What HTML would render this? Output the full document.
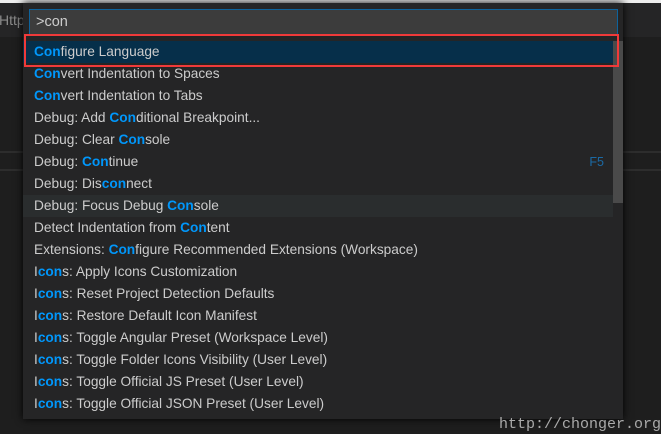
<!DOCTYPE html>
<html><head><style>
body{margin:0;width:661px;height:434px;background:#1e1e1e;position:relative;overflow:hidden;font-family:"Liberation Sans",sans-serif;}
.top{position:absolute;left:0;top:0;width:661px;height:3px;background:#eeeeee}
.tab{position:absolute;left:0;top:3px;width:661px;height:34px;background:#252526}
.http{position:absolute;left:-1px;top:12px;color:#8a8a8a;font-size:14px}
.line{position:absolute;left:0;width:661px;height:2px;background:#2d2d2d}
.w{position:absolute;left:23px;top:3px;width:600px;height:416px;background:#252526;box-shadow:0 0 8px #000}
.inp{position:absolute;left:6px;top:6px;width:581px;height:24px;background:#3c3c3c;border:1px solid #0e639c;color:#ccc;font-size:14.5px;line-height:24px;padding-left:6px;box-sizing:content-box}
.rows{position:absolute;left:0;top:38px;width:590px}
.r{height:22px;line-height:22px;color:#cccccc;font-size:13.7px;padding-left:11px;position:relative}
.r b{color:#0097fb}
.sel{background:#062f4a}
.hov{background:#2a2d2e}
.f5{position:absolute;right:9px;top:0;color:#1b6aa5;font-size:12.5px}
.sb{position:absolute;left:590px;top:38px;width:10px;height:162px;background:#4a4a4a}
.red{position:absolute;left:24px;top:34px;width:591px;height:29px;border:2px solid #f03a3a}
.wm{position:absolute;left:499px;top:416px;color:#aaa;font-family:"Liberation Mono",monospace;font-size:15px}
</style></head><body>
<div class="top"></div><div class="tab"></div>
<div class="http">Http</div>
<div class="line" style="top:151px"></div><div class="line" style="top:169px"></div>
<div class="w">
<div class="inp">&gt;con</div>
<div class="rows">
<div class="r sel"><b>Con</b>figure Language</div>
<div class="r"><b>Con</b>vert Indentation to Spaces</div>
<div class="r"><b>Con</b>vert Indentation to Tabs</div>
<div class="r">Debug: Add <b>Con</b>ditional Breakpoint...</div>
<div class="r">Debug: Clear <b>Con</b>sole</div>
<div class="r">Debug: <b>Con</b>tinue<span class="f5">F5</span></div>
<div class="r">Debug: Dis<b>con</b>nect</div>
<div class="r hov">Debug: Focus Debug <b>Con</b>sole</div>
<div class="r">Detect Indentation from <b>Con</b>tent</div>
<div class="r">Extensions: <b>Con</b>figure Recommended Extensions (Workspace)</div>
<div class="r">I<b>con</b>s: Apply Icons Customization</div>
<div class="r">I<b>con</b>s: Reset Project Detection Defaults</div>
<div class="r">I<b>con</b>s: Restore Default Icon Manifest</div>
<div class="r">I<b>con</b>s: Toggle Angular Preset (Workspace Level)</div>
<div class="r">I<b>con</b>s: Toggle Folder Icons Visibility (User Level)</div>
<div class="r">I<b>con</b>s: Toggle Official JS Preset (User Level)</div>
<div class="r">I<b>con</b>s: Toggle Official JSON Preset (User Level)</div>
</div>
<div class="sb"></div>
</div>
<div class="red"></div>
<div class="wm">http://chonger.org</div>
</body></html>
